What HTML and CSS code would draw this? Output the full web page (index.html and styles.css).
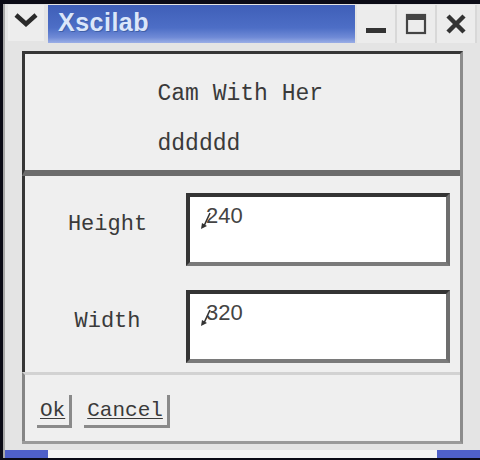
FILE: index.html
```html
<!DOCTYPE html>
<html>
<head>
<meta charset="utf-8">
<link rel="stylesheet" href="styles.css">
</head>
<body>
<div class="window">
  <div class="titlebar">
    <div class="menubtn">
      <svg width="24" height="14" viewBox="0 0 24 14"><path d="M2 2 L12 11 L22 2" fill="none" stroke="#2a2a2a" stroke-width="4.5" stroke-linejoin="miter"/></svg>
    </div>
    <div class="title">Xscilab</div>
    <div class="wbtns">
      <div class="wbtn"><svg width="22" height="22" viewBox="0 0 22 22"><rect x="1" y="15" width="20" height="5" fill="#333"/></svg></div>
      <div class="wbtn"><svg width="22" height="22" viewBox="0 0 22 22"><rect x="2" y="2" width="18" height="18" fill="none" stroke="#444" stroke-width="2.2"/><rect x="2" y="2" width="18" height="5" fill="#444"/></svg></div>
      <div class="wbtn"><svg width="24" height="22" viewBox="0 0 24 22"><path d="M4 3 L20 19 M20 3 L4 19" stroke="#333" stroke-width="4.5"/></svg></div>
    </div>
  </div>
  <div class="client">
    <div class="msg">
      <div class="msgtext">
        <div>Cam With Her</div>
        <div>dddddd</div>
      </div>
    </div>
    <div class="form">
      <div class="label">Height</div>
      <div class="field">240<svg class="caret" width="12" height="18" viewBox="0 0 12 18"><path d="M10 1 L4 14" stroke="#333" stroke-width="1.6"/><polygon points="1,17 2,11 7,14" fill="#333"/></svg></div>
      <div class="label">Width</div>
      <div class="field">320<svg class="caret" width="12" height="18" viewBox="0 0 12 18"><path d="M10 1 L4 14" stroke="#333" stroke-width="1.6"/><polygon points="1,17 2,11 7,14" fill="#333"/></svg></div>
    </div>
    <div class="buttons">
      <span class="btn">Ok</span>
      <span class="btn">Cancel</span>
    </div>
  </div>
  <div class="bottom">
    <div class="corner"></div>
    <div class="mid"></div>
    <div class="corner"></div>
  </div>
</div>
</body>
</html>
```

FILE: styles.css
```css
html, body {
  margin: 0;
  padding: 0;
}
body {
  background: #0b0b16;
  width: 480px;
  height: 460px;
  overflow: hidden;
}
.window {
  margin: 4px 0 0 3px;
  width: 477px;
  height: 454px;
  background: #e4e4e4;
  border-left: 2px solid #a8a8a8;
  box-sizing: border-box;
  display: flex;
  flex-direction: column;
}
.titlebar {
  height: 40px;
  display: flex;
  align-items: flex-start;
  padding-left: 3px;
  flex: none;
}
.menubtn {
  width: 36px;
  height: 36px;
  margin-top: 1px;
  background: #ededed;
  display: flex;
  align-items: center;
  justify-content: center;
}
.menubtn svg {
  margin-top: -6px;
}
.title {
  margin-left: 4px;
  width: 307px;
  height: 38px;
  margin-top: 1px;
  box-sizing: border-box;
  background: linear-gradient(#3f5fb8 0%, #4d6ec6 60%, #6f8ad6 85%, #9aaee6 100%);
  color: #dbe6fa;
  font-family: "Liberation Sans", Arial, sans-serif;
  font-weight: bold;
  font-size: 25px;
  letter-spacing: 0.5px;
  line-height: 34px;
  padding-left: 10px;
  text-shadow: 1px 1px 0 #4060a8;
}
.wbtns {
  display: flex;
  margin-left: 2px;
  height: 38px;
  margin-top: 1px;
}
.wbtn {
  width: 38px;
  height: 38px;
  background: #ececec;
  border-right: 2px solid #d8d8d8;
  display: flex;
  align-items: center;
  justify-content: center;
}
.client {
  margin: 7px 0 0 17px;
  width: 441px;
  height: 393px;
  box-sizing: border-box;
  border-top: 3px solid #363636;
  border-right: 3px solid #8c8c8c;
  border-bottom: 3px solid #9a9a9a;
  display: flex;
  flex-direction: column;
  flex: none;
}
.msg {
  height: 122px;
  box-sizing: border-box;
  border-left: 3px solid #363636;
  border-bottom: 6px solid #6c6c6c;
  background: #efefef;
  display: flex;
  justify-content: center;
  padding-top: 15px;
}
.msgtext {
  font-family: "Liberation Mono", "DejaVu Sans Mono", monospace;
  font-size: 23px;
  line-height: 50px;
  color: #3a3a3a;
  width: 170px;
  text-align: left;
}
.form {
  height: 196px;
  box-sizing: border-box;
  border-left: 3px solid #363636;
  background: #efefef;
  display: grid;
  grid-template-columns: 161px 264px;
  grid-template-rows: 73px 73px;
  row-gap: 24px;
  padding-top: 17px;
}
.label {
  font-family: "Liberation Mono", "DejaVu Sans Mono", monospace;
  font-size: 22px;
  color: #3a3a3a;
  text-align: center;
  align-self: center;
  padding-bottom: 10px;
  padding-left: 4px;
}
.field {
  position: relative;
  box-sizing: border-box;
  background: #ffffff;
  border-top: 4px solid #343434;
  border-left: 4px solid #343434;
  border-right: 4px solid #6e6e6e;
  border-bottom: 4px solid #7a7a7a;
  font-family: "Liberation Sans", Arial, sans-serif;
  font-size: 22px;
  line-height: 24px;
  color: #444;
  padding: 7px 0 0 16px;
}
.caret {
  position: absolute;
  left: 10px;
  top: 15px;
}
.buttons {
  flex: 1;
  box-sizing: border-box;
  border-top: 3px solid #d2d2d2;
  border-left: 3px solid #858585;
  background: #efefef;
  display: flex;
  align-items: flex-start;
  padding: 20px 0 0 12px;
  gap: 12px;
}
.btn {
  font-family: "Liberation Mono", "DejaVu Sans Mono", monospace;
  font-size: 21px;
  line-height: 28px;
  color: #3a3a3a;
  text-decoration: underline;
  text-decoration-thickness: 1px;
  text-underline-offset: 2px;
  border-right: 3px solid #8a8a8a;
  border-bottom: 3px solid #8a8a8a;
  padding: 2px 4px 0 3px;
}
.bottom {
  margin-top: auto;
  height: 8px;
  display: flex;
  flex: none;
}
.corner {
  width: 43px;
  background: #4f60c8;
}
.mid {
  flex: 1;
  background: #f4f4f4;
}
```
